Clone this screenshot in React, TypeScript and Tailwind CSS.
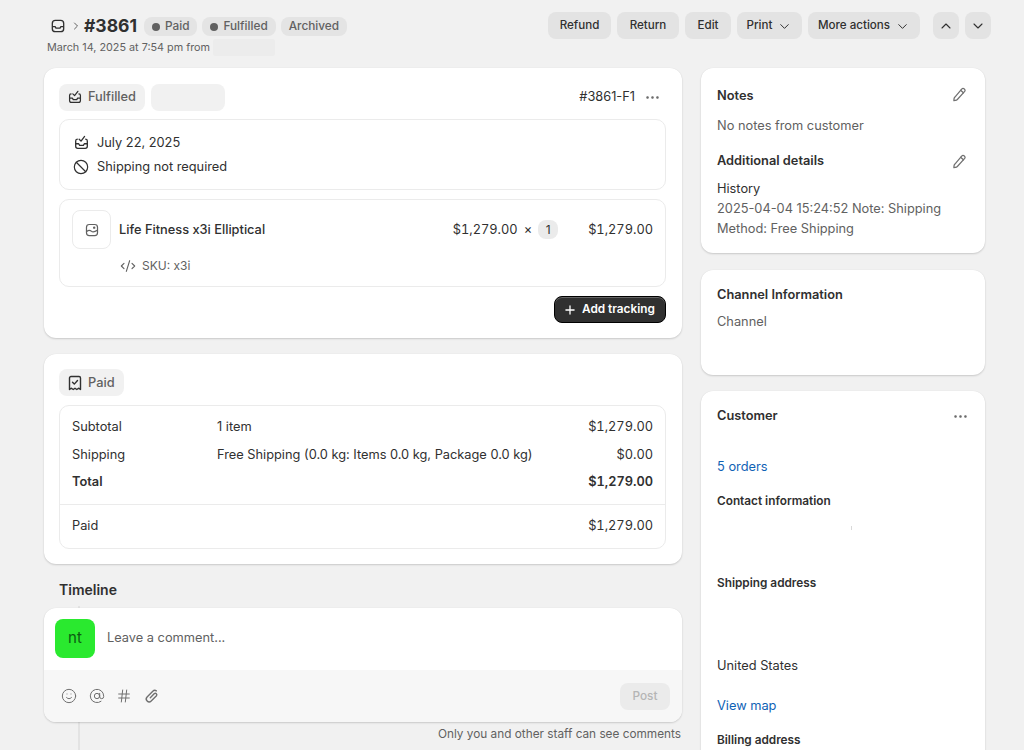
import React from 'react';
import { ChevronDown, ChevronRight, ChevronUp, Ellipsis, Plus, Ban, CodeXml, Smile, AtSign, Hash } from 'lucide-react';

const InboxIcon = ({ className = '' }: { className?: string }) => (
  <svg viewBox="0 0 16 16" fill="none" stroke="currentColor" strokeWidth="1.500" className={className}>
    <rect x="1.500" y="1.500" width="13" height="13" rx="3.500" />
    <path d="M1.500 8.800h3.200l1 1.700h4.600l1-1.700h3.200" strokeLinejoin="round" />
  </svg>
);

const FulfilledIcon = ({ className = '' }: { className?: string }) => (
  <svg viewBox="0 0 16 16" fill="none" stroke="currentColor" strokeWidth="1.400" strokeLinecap="round" strokeLinejoin="round" className={className}>
    <path d="M3.500 4.500A1.800 1.800 0 0 0 1.800 6.300V12a2.200 2.200 0 0 0 2.200 2.200h8a2.200 2.200 0 0 0 2.200-2.200V6.300a1.800 1.800 0 0 0-1.700-1.800" />
    <path d="M1.800 9.300h3.200l1 1.700h4l1-1.700h3.200" />
    <path d="M5.500 4.500 7.500 6.500 11.300 1.500" />
  </svg>
);

const ReceiptIcon = ({ className = '' }: { className?: string }) => (
  <svg viewBox="0 0 16 16" fill="none" stroke="currentColor" strokeWidth="1.400" strokeLinecap="round" strokeLinejoin="round" className={className}>
    <path d="M2.500 3A1.500 1.500 0 0 1 4 1.500h8A1.500 1.500 0 0 1 13.500 3v11.500l-1.900-1.300-1.800 1.300L8 13.200l-1.800 1.300-1.800-1.300-1.900 1.300z" />
    <path d="m5.500 7.300 1.800 1.800 3.200-3.600" />
  </svg>
);

const ImageIcon = ({ className = '' }: { className?: string }) => (
  <svg viewBox="0 0 16 16" fill="none" stroke="currentColor" strokeWidth="1.400" strokeLinejoin="round" className={className}>
    <rect x="1.700" y="1.700" width="12.600" height="12.600" rx="3.200" />
    <path d="M1.900 9.800c2.100-2 3.600-2 5.300-.5s3.200 1.400 6.900-1" />
    <circle cx="10.500" cy="5.300" r=".7" />
  </svg>
);

const PencilIcon = ({ className = '' }: { className?: string }) => (
  <svg viewBox="0 0 16 16" fill="none" stroke="currentColor" strokeWidth="1.300" strokeLinecap="round" strokeLinejoin="round" className={className}>
    <path d="M10.300 2.300a2 2 0 0 1 3 2.700l-7.600 8.300c-.6.600-1.400.9-2.200 1l-1.500.2.100-1.500c.1-.9.400-1.700 1-2.300z" />
    <path d="m9.200 3.500 3 2.700" />
  </svg>
);

const ClipIcon = ({ className = '' }: { className?: string }) => (
  <svg viewBox="0 0 16 16" fill="none" stroke="currentColor" strokeWidth="1.400" strokeLinecap="round" strokeLinejoin="round" className={className}>
    <path d="M6.300 9.700 10.400 5.600a1.500 1.500 0 0 1 2.100 2.100l-5.300 5.300a2.900 2.900 0 0 1-4.100-4.100l5.700-5.700a3 3 0 0 1 3.600-.4" />
  </svg>
);

const Badge = ({ label, dot }: { label: string; dot?: boolean }) => (
  <span className="flex h-[19px] items-center gap-[5px] rounded-[8px] bg-[#e4e4e4] px-[8px] pt-px text-[11.800px] font-medium text-[#616161]">
    {dot && <span className="h-[8px] w-[8px] rounded-full bg-[#616161]" />}
    {label}
  </span>
);

const HeaderButton = ({ label, chevron, width }: { label: string; chevron?: boolean; width: string }) => (
  <button className={`flex h-[27px] items-center justify-center gap-[5px] rounded-[8px] bg-[#e3e3e3] pt-px text-[11.600px] font-medium text-[#303030] ${width}`}>
    {label}
    {chevron && <ChevronDown size={15} strokeWidth={1.600} />}
  </button>
);

const Card = ({ className = '', children }: { className?: string; children: React.ReactNode }) => (
  <div className={`rounded-[12px] bg-white shadow-[0_1px_2px_rgba(0,0,0,0.16),0_0_1px_rgba(0,0,0,0.08)] ${className}`}>
    {children}
  </div>
);

const TotalRow = ({ left, mid, right, bold }: { left: string; mid?: string; right: string; bold?: boolean }) => (
  <div className={`flex items-center text-[12.800px] leading-[20px] ${bold ? 'font-semibold' : ''}`}>
    <span className="w-[145px]">{left}</span>
    <span className="flex-1">{mid}</span>
    <span className="tabular-nums">{right}</span>
  </div>
);

export default function App() {
  return (
    <div className="h-[750px] overflow-hidden bg-[#f1f1f1] font-['Inter',sans-serif] text-[#303030]">
      <div className="flex justify-between pl-[47px] pr-[33px] pt-[12px]">
        <div className="pt-px">
          <div className="flex items-center">
            <InboxIcon className="ml-[4px] h-[14px] w-[14px] text-[#303030]" />
            <ChevronRight size={12} className="ml-[5px] text-[#616161]" />
            <span className="ml-[2px] text-[17.500px] font-bold leading-[26px]">#3861</span>
            <div className="ml-[7px] flex gap-[5px]">
              <Badge label="Paid" dot />
              <Badge label="Fulfilled" dot />
              <Badge label="Archived" />
            </div>
          </div>
          <div className="flex items-center gap-[3px] text-[10.800px] leading-[16px] text-[#616161]">
            March 14, 2025 at 7:54 pm from
            <span className="h-[17px] w-[62px] rounded-[2px] bg-[#ececec]" />
          </div>
        </div>
        <div className="flex gap-[6px]">
          <HeaderButton label="Refund" width="w-[63px]" />
          <HeaderButton label="Return" width="w-[62px]" />
          <HeaderButton label="Edit" width="w-[46px]" />
          <HeaderButton label="Print" chevron width="w-[65px]" />
          <HeaderButton label="More actions" chevron width="w-[112px]" />
          <div className="ml-[7px] flex gap-[6px]">
            <button className="flex h-[27px] w-[26px] items-center justify-center rounded-[8px] bg-[#e3e3e3]"><ChevronUp size={16} strokeWidth={1.600} /></button>
            <button className="flex h-[27px] w-[26px] items-center justify-center rounded-[8px] bg-[#e3e3e3]"><ChevronDown size={16} strokeWidth={1.600} /></button>
          </div>
        </div>
      </div>

      <div className="mt-[12px] flex gap-[19px] pl-[44px]">
        <div className="flex w-[638px] flex-col">
          <Card className="pb-[15px] pl-[15px] pr-[16px] pt-[15px]">
            <div className="flex h-[28px] items-center justify-between">
              <div className="flex gap-[6px]">
                <span className="flex h-[27px] items-center gap-[6px] rounded-[8px] bg-[#f1f1f1] px-[9px] text-[12.800px] font-medium text-[#616161]">
                  <FulfilledIcon className="h-[14px] w-[14px] text-[#303030]" />
                  Fulfilled
                </span>
                <span className="h-[27px] w-[74px] rounded-[8px] bg-[#f1f1f1]" />
              </div>
              <div className="flex items-center gap-[9px] pr-[5px] text-[12.800px]">
                #3861-F1
                <Ellipsis size={17} strokeWidth={1.600} className="text-[#616161]" />
              </div>
            </div>
            <div className="mt-[8px] flex h-[71px] flex-col justify-center gap-[4px] rounded-[10px] border border-[#ebebeb] pl-[14px] text-[12.800px] leading-[20px]">
              <div className="flex items-center gap-[8px]"><FulfilledIcon className="h-[15px] w-[15px]" />July 22, 2025</div>
              <div className="-ml-px flex items-center gap-[8px]"><Ban size={16} strokeWidth={1.800} />Shipping not required</div>
            </div>
            <div className="mt-[9px] h-[88px] rounded-[10px] border border-[#ebebeb] px-[12px] pt-[10px]">
              <div className="flex items-center text-[12.800px]">
                <span className="flex h-[39px] w-[39px] items-center justify-center rounded-[8px] border border-[#ebebeb] text-[#616161]">
                  <ImageIcon className="h-[14px] w-[14px]" />
                </span>
                <span className="ml-[8px] font-medium">Life Fitness x3i Elliptical</span>
                <span className="ml-auto tabular-nums">$1,279.00</span>
                <span className="ml-[6px]">×</span>
                <span className="ml-[6px] flex h-[19px] w-[20px] items-center justify-center rounded-[8px] bg-[#ebebeb] text-[12px]">1</span>
                <span className="ml-[30px] tabular-nums">$1,279.00</span>
              </div>
              <div className="ml-[48px] mt-[8px] flex items-center gap-[6px] text-[12px] leading-[18px] text-[#616161]">
                <CodeXml size={16} strokeWidth={1.700} />
                SKU: x3i
              </div>
            </div>
            <div className="mt-[9px] flex justify-end">
              <button className="flex h-[27px] w-[112px] items-center gap-[5px] rounded-[8px] border border-black bg-[#303030] pl-[8px] text-[11.800px] font-semibold text-white shadow-[inset_0_1px_0_rgba(255,255,255,0.25)]">
                <Plus size={14} strokeWidth={2.200} />
                Add tracking
              </button>
            </div>
          </Card>

          <Card className="mt-[16px] pb-[15px] pl-[15px] pr-[16px] pt-[15px]">
            <span className="flex h-[27px] w-[65px] items-center gap-[5px] rounded-[8px] bg-[#f1f1f1] px-[8px] text-[12.800px] font-medium text-[#616161]">
              <ReceiptIcon className="h-[16px] w-[16px] shrink-0 text-[#303030]" />
              Paid
            </span>
            <div className="mt-[9px] rounded-[10px] border border-[#ebebeb] px-[12px]">
              <div className="flex flex-col gap-[7.500px] pb-[12px] pt-[11px]">
                <TotalRow left="Subtotal" mid="1 item" right="$1,279.00" />
                <TotalRow left="Shipping" mid="Free Shipping (0.0 kg: Items 0.0 kg, Package 0.0 kg)" right="$0.00" />
                <TotalRow left="Total" right="$1,279.00" bold />
              </div>
              <div className="-mx-[12px] border-t border-[#ebebeb] px-[12px] pb-[12px] pt-[11px]">
                <TotalRow left="Paid" right="$1,279.00" />
              </div>
            </div>
          </Card>

          <div className="relative mt-[16px]">
            <div className="pl-[15px] text-[14px] font-semibold leading-[20px]">Timeline</div>
            <div className="absolute left-[34px] top-[26px] h-[150px] w-[2px] bg-[#e3e3e3]" />
            <Card className="relative mt-[8px] overflow-hidden">
              <div className="flex h-[62px] items-center pb-[2px] pl-[11px]">
                <span className="flex h-[39px] w-[40px] items-center justify-center rounded-[8px] bg-[#2ae92f] text-[15px] text-[#0c5c12]">nt</span>
                <span className="ml-[12px] text-[12.800px] text-[#616161]">Leave a comment...</span>
              </div>
              <div className="flex h-[52px] items-center bg-[#f7f7f7] pl-[17px] pr-[12px] text-[#707070]">
                <div className="flex gap-[11.500px]">
                  <Smile size={16} strokeWidth={1.500} />
                  <AtSign size={16} strokeWidth={1.500} />
                  <Hash size={16} strokeWidth={1.500} />
                  <ClipIcon className="h-[16px] w-[16px]" />
                </div>
                <span className="ml-auto flex h-[27px] w-[50px] items-center justify-center rounded-[8px] bg-[#ebebeb] pt-px text-[11.800px] font-medium text-[#b5b5b5]">Post</span>
              </div>
            </Card>
            <div className="mt-[4px] pr-px text-right text-[11.800px] leading-[16px] text-[#616161]">Only you and other staff can see comments</div>
          </div>
        </div>

        <div className="flex w-[284px] flex-col">
          <Card className="h-[185px] pl-[16px] pr-[15px] pt-[18px] text-[12.800px] leading-[20px]">
            <div className="flex items-center justify-between font-semibold">Notes<PencilIcon className="mb-[4px] mr-[3px] h-[15px] w-[15px] text-[#707070]" /></div>
            <div className="mt-[10px] text-[#616161]">No notes from customer</div>
            <div className="mt-[15px] flex items-center justify-between font-semibold">Additional details<PencilIcon className="mr-[3px] h-[15px] w-[15px] text-[#707070]" /></div>
            <div className="mt-[8px] text-[#616161]">
              <div className="text-[#303030]">History</div>
              2025-04-04 15:24:52 Note: Shipping Method: Free Shipping
            </div>
          </Card>
          <Card className="mt-[17px] h-[105px] pl-[16px] pr-[15px] pt-[15px] text-[12.800px] leading-[20px]">
            <div className="font-semibold">Channel Information</div>
            <div className="mt-[7px] text-[#616161]">Channel</div>
          </Card>
          <Card className="mt-[16px] h-[400px] shrink-0 pl-[16px] pr-[15px] pt-[15px] text-[12.800px] leading-[20px]">
            <div className="flex items-center justify-between font-semibold">Customer<Ellipsis size={17} strokeWidth={1.600} className="mr-[1px] text-[#616161]" /></div>
            <div className="mt-[31px] text-[#0f62b5]">5 orders</div>
            <div className="mt-[14px] text-[11.800px] font-semibold">Contact information</div>
            <div className="ml-[134px] mt-[15px] h-[4px] w-px bg-[#d9d9d9]" />
            <div className="mt-[43px] text-[11.800px] font-semibold">Shipping address</div>
            <div className="mt-[63px]">United States</div>
            <div className="mt-[20px] text-[#0f62b5]">View map</div>
            <div className="mt-[14px] text-[11.800px] font-semibold">Billing address</div>
          </Card>
        </div>
      </div>
    </div>
  );
}
